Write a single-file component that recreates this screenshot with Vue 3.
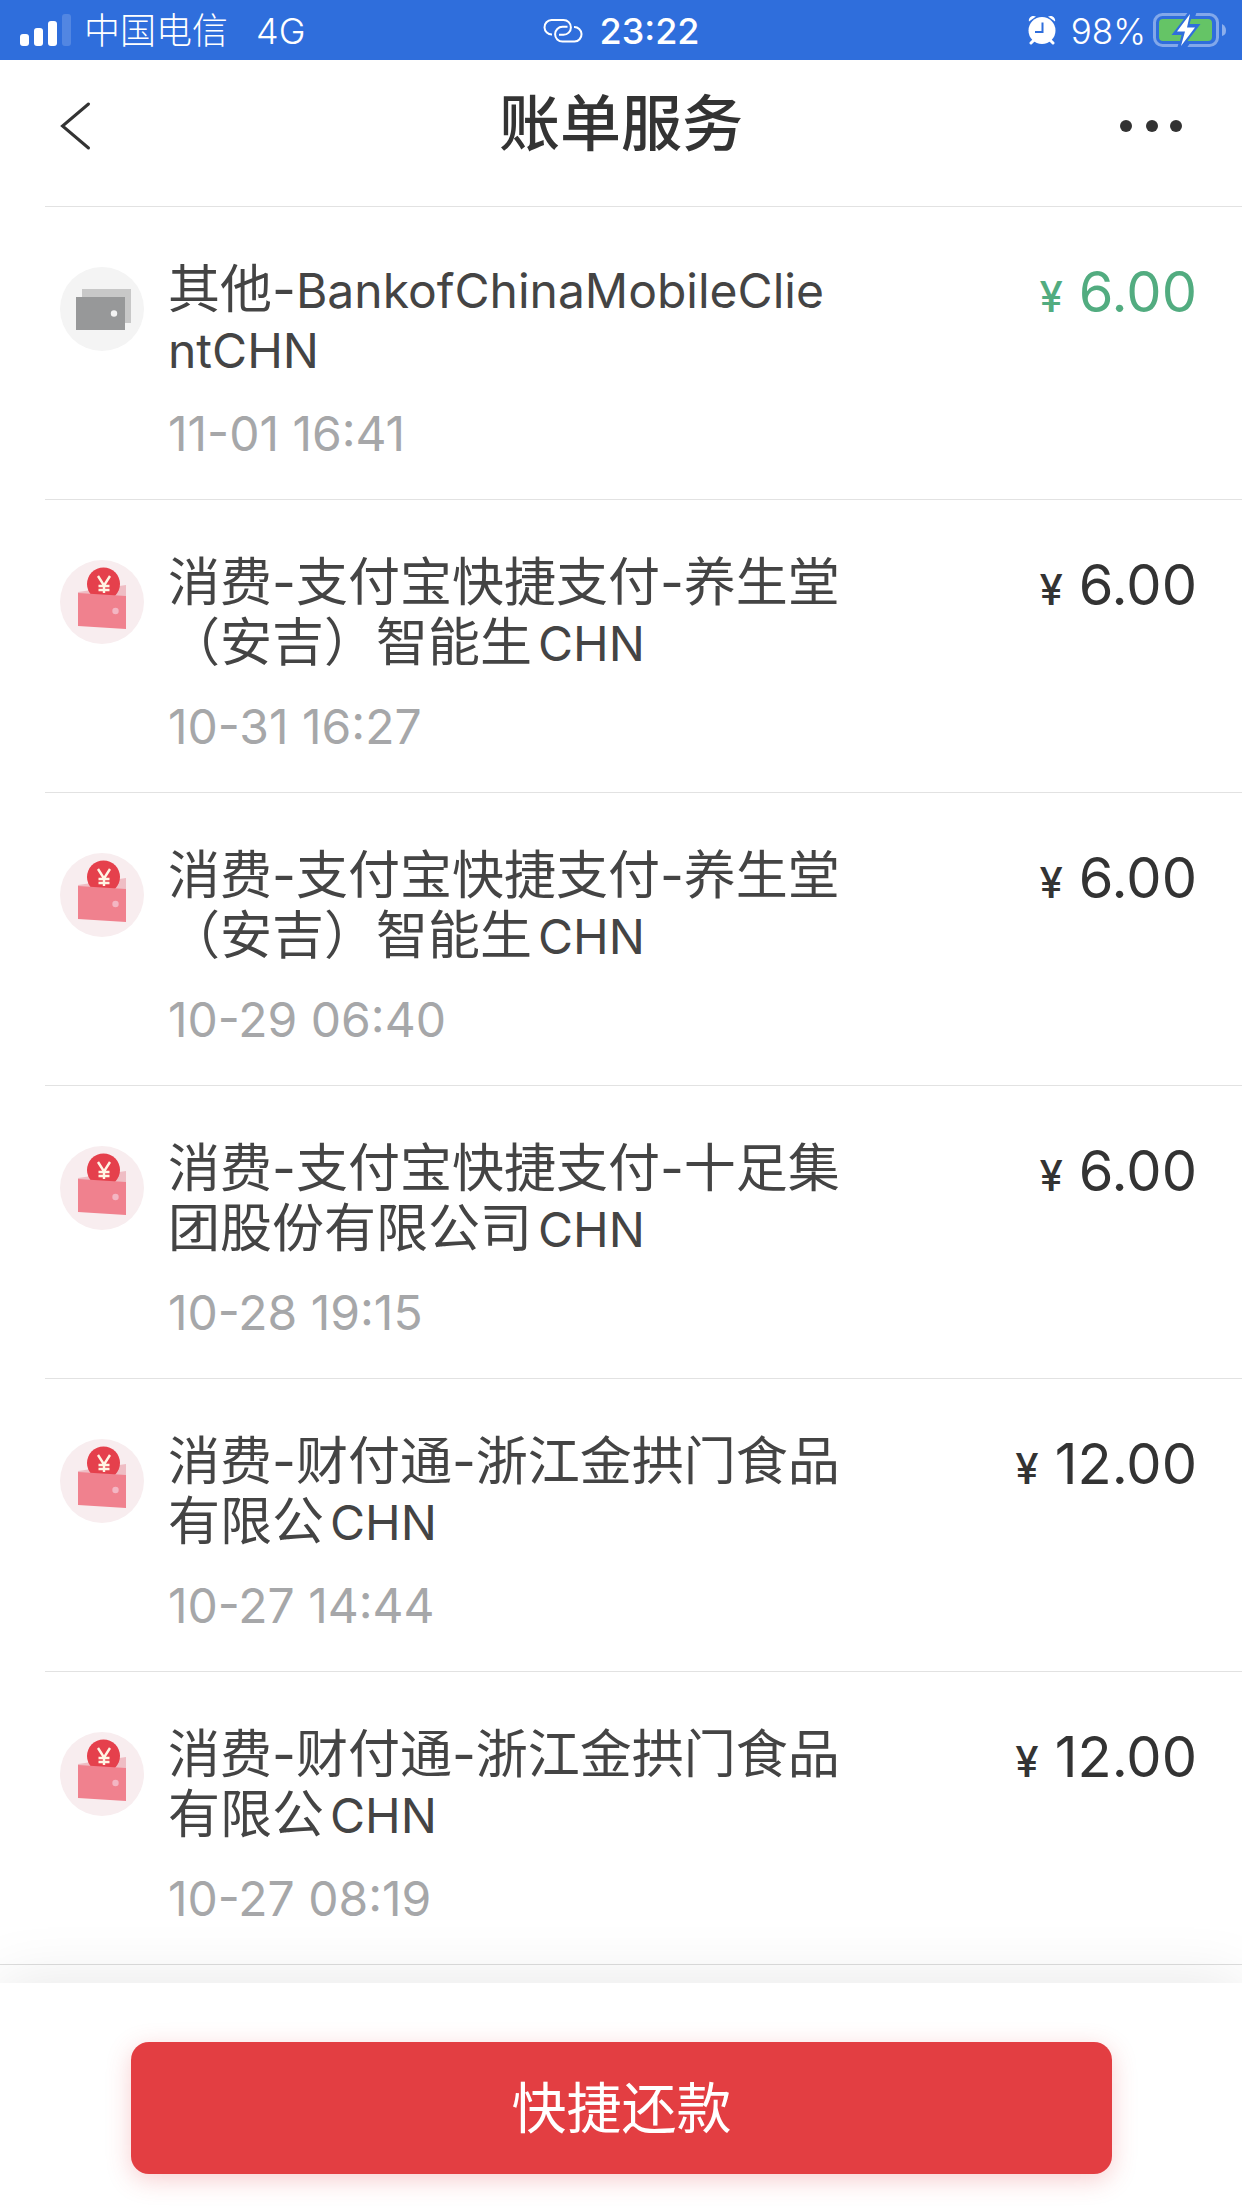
<script setup>
const bills = [
  { id: 1, income: true, title: '其他-BankofChinaMobileClientCHN', time: '11-01 16:41', amount: '6.00' },
  { id: 2, title: '消费-支付宝快捷支付-养生堂（安吉）智能生CHN', time: '10-31 16:27', amount: '6.00' },
  { id: 3, title: '消费-支付宝快捷支付-养生堂（安吉）智能生CHN', time: '10-29 06:40', amount: '6.00' },
  { id: 4, title: '消费-支付宝快捷支付-十足集团股份有限公司CHN', time: '10-28 19:15', amount: '6.00' },
  { id: 5, title: '消费-财付通-浙江金拱门食品有限公CHN', time: '10-27 14:44', amount: '12.00' },
  { id: 6, title: '消费-财付通-浙江金拱门食品有限公CHN', time: '10-27 08:19', amount: '12.00' },
]
// Splits a title into its Chinese part and the Latin tail, which is set a little smaller
const splitTitle = (text) => text.match(/^(.*?)([A-Za-z]*)$/).slice(1)
const rows = bills.map((bill) => {
  const [lead, tail] = splitTitle(bill.title)
  return { ...bill, lead, tail, spaced: !lead.endsWith('-') }
})
</script>

<template>
  <div class="page">
    <div class="status">
      <div class="side">
        <svg class="signal" width="51" height="32" viewBox="0 0 51 32" fill="#fff" aria-hidden="true">
          <rect y="20" width="9" height="12" rx="3" />
          <rect x="14" y="14" width="9" height="18" rx="3" />
          <rect x="28" y="7" width="9" height="25" rx="3" />
          <rect x="42" width="9" height="32" rx="3" opacity=".17" />
        </svg>
        <span class="carrier">中国电信</span>
        <span class="network">4G</span>
      </div>
      <div class="clock">
        <svg width="40" height="24" viewBox="0 0 40 24" fill="none" stroke="#fff" stroke-width="2" aria-hidden="true">
          <path d="M9 15.500A7.200 7.200 0 0 1 8.500 1H20.500a7.400 7.400 0 0 1 0 14.800H16" />
          <path d="M24.500 7.800H19.500a7.400 7.400 0 0 0 0 14.800H31.500A7.200 7.200 0 0 0 31 8" />
        </svg>
        <span>23:22</span>
      </div>
      <div class="side end">
        <svg width="28" height="30" viewBox="0 0 28 30" aria-hidden="true">
          <path d="M6 25l-3 3M22 25l3 3" fill="none" stroke="#fff" stroke-width="3" stroke-linecap="round" />
          <path d="M1 6.500C0 3 4 -.5 8 1.500zM27 6.500C28 3 24 -.5 20 1.500z" fill="#fff" />
          <circle cx="14" cy="15.500" r="13.500" fill="#fff" />
          <path d="M14.500 7.500v9.500H7" fill="none" stroke="#2f6edc" stroke-width="2" />
        </svg>
        <span class="percent">98%</span>
        <svg width="74" height="36" viewBox="0 0 74 36" aria-hidden="true">
          <rect x="1.500" y="2.500" width="63" height="31" rx="8" fill="none" stroke="#fff" stroke-opacity=".4" stroke-width="3" />
          <path d="M69 12q4 2 4 6.500T69 24z" fill="#fff" fill-opacity=".45" />
          <path d="M36 -1L18 22h10l-4 15h9L51 11H40l4-12z" fill="#2f6edc" />
          <path d="M10 7H31L18.500 23H28.500L27 29H10a4 4 0 0 1-4-4V11a4 4 0 0 1 4-4z" fill="#65c466" />
          <path d="M38 7H55a4 4 0 0 1 4 4V25a4 4 0 0 1-4 4H34.500L47.500 12H36.500z" fill="#65c466" />
          <path d="M37.500 1L22.500 20.500H31L27.500 35L43 14H35.500z" fill="#2f6edc" />
          <path d="M37 2L24 19.500h8L28 34l14-18.500h-8z" fill="#fff" />
        </svg>
      </div>
    </div>

    <header class="header">
      <button class="nav-button" type="button" aria-label="返回">
        <svg width="32" height="50" viewBox="0 0 32 50" fill="none" stroke="#333" stroke-width="3" stroke-linecap="round">
          <path d="M28.500 3L2.500 25l26 22" />
        </svg>
      </button>
      <h1>账单服务</h1>
      <button class="nav-button" type="button" aria-label="更多">
        <svg width="62" height="12" viewBox="0 0 62 12" fill="#333">
          <circle cx="6" cy="6" r="6" />
          <circle cx="32" cy="6" r="6" />
          <circle cx="56" cy="6" r="6" />
        </svg>
      </button>
    </header>

    <main>
      <ul class="bills">
        <li v-for="bill in rows" :key="bill.id" class="bill">
          <svg v-if="bill.income" class="icon" viewBox="0 0 84 84" aria-hidden="true">
            <circle cx="42" cy="42" r="42" fill="#f4f4f4" />
            <path d="M22 22h49v34H22z" fill="#c8c8c8" />
            <path d="M16 30h49v33H16z" fill="#979899" />
            <circle cx="54" cy="46.500" r="3.200" fill="#f4f4f4" />
          </svg>
          <svg v-else class="icon" viewBox="0 0 84 84" aria-hidden="true">
            <circle cx="42" cy="42" r="42" fill="#f8edef" />
            <path d="M18 32l48-7v14H18z" fill="#efbdc4" />
            <circle cx="43.500" cy="24" r="16.500" fill="#e5404c" />
            <path d="M38 16l6 9.500 6-9.500M44 25v8M38.500 26h11M38.500 30h11" fill="none" stroke="#fff5e4" stroke-width="2.400" />
            <path d="M18 33l48 3v33l-48-3z" fill="#f0818e" />
            <circle cx="55.500" cy="51" r="3.200" fill="#f3b6c3" />
          </svg>
          <div class="detail">
            <p class="title">{{ bill.lead }}<span class="latin" :class="{ spaced: bill.spaced }">{{ bill.tail }}</span></p>
            <time class="time">{{ bill.time }}</time>
          </div>
          <p class="amount" :class="{ income: bill.income }"><span class="yen">¥</span>{{ bill.amount }}</p>
        </li>
      </ul>
    </main>

    <footer class="footer">
      <button class="repay" type="button">快捷还款</button>
    </footer>
  </div>
</template>

<style>
body {
  margin: 0;
  background: #fff;
}
</style>

<style scoped>
.page {
  display: flex;
  flex-direction: column;
  min-height: 100vh;
  color: #333;
  font-family: Inter, "Noto Sans CJK SC", sans-serif;
}
.page * {
  box-sizing: border-box;
}
.status {
  display: flex;
  align-items: center;
  height: 60px;
  padding: 0 15px 0 20px;
  background: #2f6edc;
  color: #fff;
  font-size: 36px;
  line-height: 60px;
  font-weight: 300;
}
.side {
  display: flex;
  flex: 1;
  align-items: center;
}
.end {
  justify-content: flex-end;
}
.carrier {
  margin-left: 13px;
  padding-top: 2px;
}
.network {
  margin-left: 28px;
  padding-top: 2px;
}
.clock {
  display: flex;
  align-items: center;
  gap: 16px;
  margin-right: 4px;
  padding-top: 2px;
  font-weight: 500;
}
.percent {
  margin: 0 7px 0 15px;
  padding-top: 2px;
  font-size: 35px;
}
.header {
  display: flex;
  align-items: center;
  justify-content: space-between;
  height: 146px;
  padding: 0 60px 14px;
}
h1 {
  margin: 0;
  padding-bottom: 4px;
  font-size: 61px;
  line-height: 80px;
  font-weight: 500;
}
.nav-button {
  display: flex;
  width: 62px;
  padding: 0;
  border: 0;
  background: none;
}
.bills {
  margin: 0;
  padding: 0;
  border-bottom: 1px solid #dedede;
  list-style: none;
}
.bill {
  display: flex;
  align-items: flex-start;
  margin-left: 45px;
  padding: 53px 45px 35px 15px;
  border-top: 1px solid #e2e2e2;
}
.icon {
  flex: none;
  width: 84px;
  height: 84px;
  margin-top: 7px;
}
.detail {
  width: 684px;
  margin-left: 24px;
}
.title {
  margin: 0 0 24px;
  color: #444;
  font-size: 52px;
  line-height: 60px;
  word-break: break-all;
}
.latin {
  font-size: 48px;
  line-height: 48px;
}
.spaced {
  margin-left: 6px;
}
.time {
  display: block;
  color: #a6a7a9;
  font-size: 48px;
  line-height: 60px;
}
.amount {
  margin: 0 0 0 auto;
  font-size: 56px;
  line-height: 64px;
}
.income {
  color: #52ac80;
}
.yen {
  margin-right: 16px;
  font-size: 42px;
  font-weight: 500;
}
.footer {
  position: sticky;
  bottom: 0;
  margin-top: auto;
  padding: 59px 130px 34px 131px;
  background: #fff;
  box-shadow: 0 0 60px rgba(0, 0, 0, .1);
}
.repay {
  display: block;
  width: 100%;
  height: 132px;
  padding: 0;
  border: 0;
  border-radius: 18px;
  background: #e33e42;
  box-shadow: 0 6px 24px rgba(227, 62, 66, .25);
  color: #fff;
  font-family: inherit;
  font-size: 55px;
  line-height: 80px;
}
</style>
